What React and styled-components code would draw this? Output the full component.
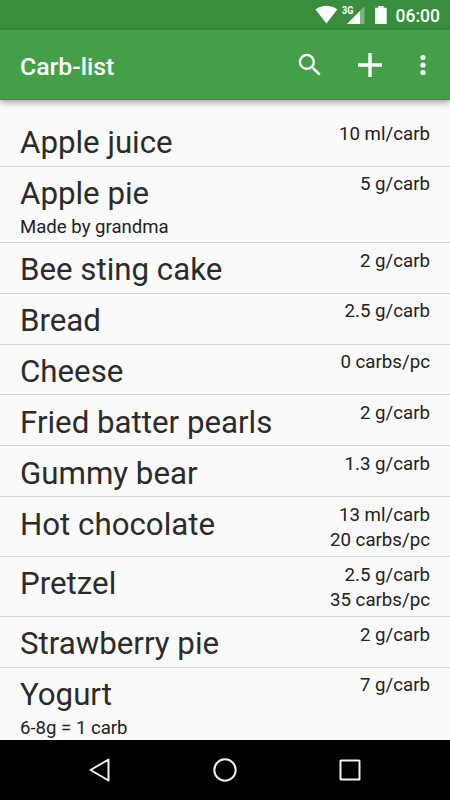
import styled, { createGlobalStyle } from "styled-components";

const foods = [
  { name: "Apple juice", rates: ["10 ml/carb"] },
  { name: "Apple pie", note: "Made by grandma", rates: ["5 g/carb"] },
  { name: "Bee sting cake", rates: ["2 g/carb"] },
  { name: "Bread", rates: ["2.5 g/carb"] },
  { name: "Cheese", rates: ["0 carbs/pc"] },
  { name: "Fried batter pearls", rates: ["2 g/carb"] },
  { name: "Gummy bear", rates: ["1.3 g/carb"] },
  { name: "Hot chocolate", rates: ["13 ml/carb", "20 carbs/pc"] },
  { name: "Pretzel", rates: ["2.5 g/carb", "35 carbs/pc"] },
  { name: "Strawberry pie", rates: ["2 g/carb"] },
  { name: "Yogurt", note: "6-8g = 1 carb", rates: ["7 g/carb"] },
];

const StatusIcons = () => (
  <svg width="76" height="30" viewBox="0 0 76 30" fill="#fff">
    <path d="M0.500 9.400C7 4.400 15.800 4.400 22.300 9.400L11.400 23.600Z" />
    <path d="M32 24L45 10.800V24Z" />
    <path d="M45 10.800L49.500 6.200V24H45Z" opacity="0.35" />
    <path d="M60 7.700h3.100V6h5.500v1.700h3.100V24H60Z" />
  </svg>
);

export default function App() {
  return (
    <Screen>
      <GlobalStyle />
      <StatusBar>
        <StatusGroup>
          <StatusIcons />
          <Network>3G</Network>
        </StatusGroup>
        <Clock>06:00</Clock>
      </StatusBar>
      <AppBar>
        <Title>Carb-list</Title>
        <Action $width={60}>
          <svg width="30" height="30" viewBox="0 0 24 24" fill="#fff">
            <path d="M15.500 14h-.79l-.28-.27A6.471 6.471 0 0 0 16 9.500 6.500 6.500 0 1 0 9.500 16c1.610 0 3.090-.59 4.230-1.570l.27.28v.79l5 4.990L20.490 19l-4.990-5zm-6 0C7.010 14 5 11.990 5 9.500S7.010 5 9.500 5 14 7.010 14 9.500 11.990 14 9.500 14z" />
          </svg>
        </Action>
        <Action $width={60}>
          <svg width="24" height="24" viewBox="0 0 24 24" fill="#fff">
            <path d="M10.300 0h3.400v10.300H24v3.400H13.700V24h-3.400V13.700H0v-3.400h10.300Z" />
          </svg>
        </Action>
        <Action $width={46}>
          <svg width="6" height="22" viewBox="0 0 6 22" fill="#fff">
            <circle cx="3" cy="3.500" r="2.600" />
            <circle cx="3" cy="11" r="2.600" />
            <circle cx="3" cy="18.500" r="2.600" />
          </svg>
        </Action>
      </AppBar>
      <List>
        {foods.map((food) => (
          <Row key={food.name}>
            <div>
              <Name>{food.name}</Name>
              {food.note && <Note>{food.note}</Note>}
            </div>
            <Rates>
              {food.rates.map((rate) => (
                <div key={rate}>{rate}</div>
              ))}
            </Rates>
          </Row>
        ))}
      </List>
      <NavBar>
        <svg width="26" height="26" viewBox="0 0 26 26">
          <path d="M3.500 13L21.500 2.500V23.500Z" />
        </svg>
        <svg width="26" height="26" viewBox="0 0 26 26">
          <circle cx="13" cy="13" r="10.700" />
        </svg>
        <svg width="26" height="26" viewBox="0 0 26 26">
          <rect x="3.500" y="3.500" width="19" height="19" rx="0.500" />
        </svg>
      </NavBar>
    </Screen>
  );
}

const GlobalStyle = createGlobalStyle`
  body {
    margin: 0;
    font-family: Roboto, sans-serif;
  }
`;

const Screen = styled.div`
  display: flex;
  flex-direction: column;
  width: 450px;
  height: 800px;
  overflow: hidden;
  background: #fafafa;
`;

const StatusBar = styled.header`
  display: flex;
  flex: none;
  justify-content: flex-end;
  height: 30px;
  padding-right: 10px;
  background: #388e3c;
  color: #fff;
`;

const StatusGroup = styled.div`
  position: relative;
  width: 76px;
  margin-right: 5px;
`;

const Network = styled.span`
  position: absolute;
  left: 27px;
  top: 4px;
  font-size: 11.5px;
  font-weight: 700;
  line-height: 13px;
  transform: scaleX(0.78);
  transform-origin: left;
`;

const Clock = styled.span`
  font-size: 17.5px;
  font-weight: 500;
  line-height: 32px;
`;

const AppBar = styled.div`
  display: flex;
  flex: none;
  align-items: center;
  box-sizing: border-box;
  height: 70px;
  padding-right: 4px;
  border-bottom: 1px solid #1b9a24;
  background: #43a047;
  box-shadow: 0 2px 7px rgba(0, 0, 0, 0.4);
  z-index: 1;
`;

const Title = styled.h1`
  flex: 1;
  margin: 0;
  padding: 3px 0 0 20px;
  color: #fff;
  font-size: 24.8px;
  font-weight: 500;
`;

const Action = styled.div`
  display: flex;
  align-items: center;
  justify-content: center;
  width: ${({ $width }) => $width}px;
  height: 70px;
`;

const List = styled.main`
  flex: 1;
  min-height: 0;
  padding-top: 15.8px;
  overflow: hidden;
`;

const Row = styled.div`
  display: flex;
  justify-content: space-between;
  box-sizing: border-box;
  padding: 0 20px 3.85px;
  box-shadow: inset 0 -1px #d5d5d5;
  color: #212121;
`;

const Name = styled.div`
  height: 37.5px;
  padding-top: 9.5px;
  color: #2b2b2b;
  font-size: 31.25px;
  line-height: 36px;
`;

const Note = styled.div`
  padding-top: 1.2px;
  margin-bottom: -1.2px;
  font-size: 18.6px;
  line-height: 25.4px;
`;

const Rates = styled.div`
  padding-top: 5.75px;
  margin-bottom: -0.55px;
  font-size: 18.7px;
  line-height: 25.4px;
  text-align: right;
`;

const NavBar = styled.nav`
  display: flex;
  flex: none;
  align-items: center;
  justify-content: center;
  gap: 99px;
  height: 60px;
  background: #000;

  svg {
    fill: none;
    stroke: #f2f2f2;
    stroke-width: 2;
    stroke-linejoin: round;
  }
`;
